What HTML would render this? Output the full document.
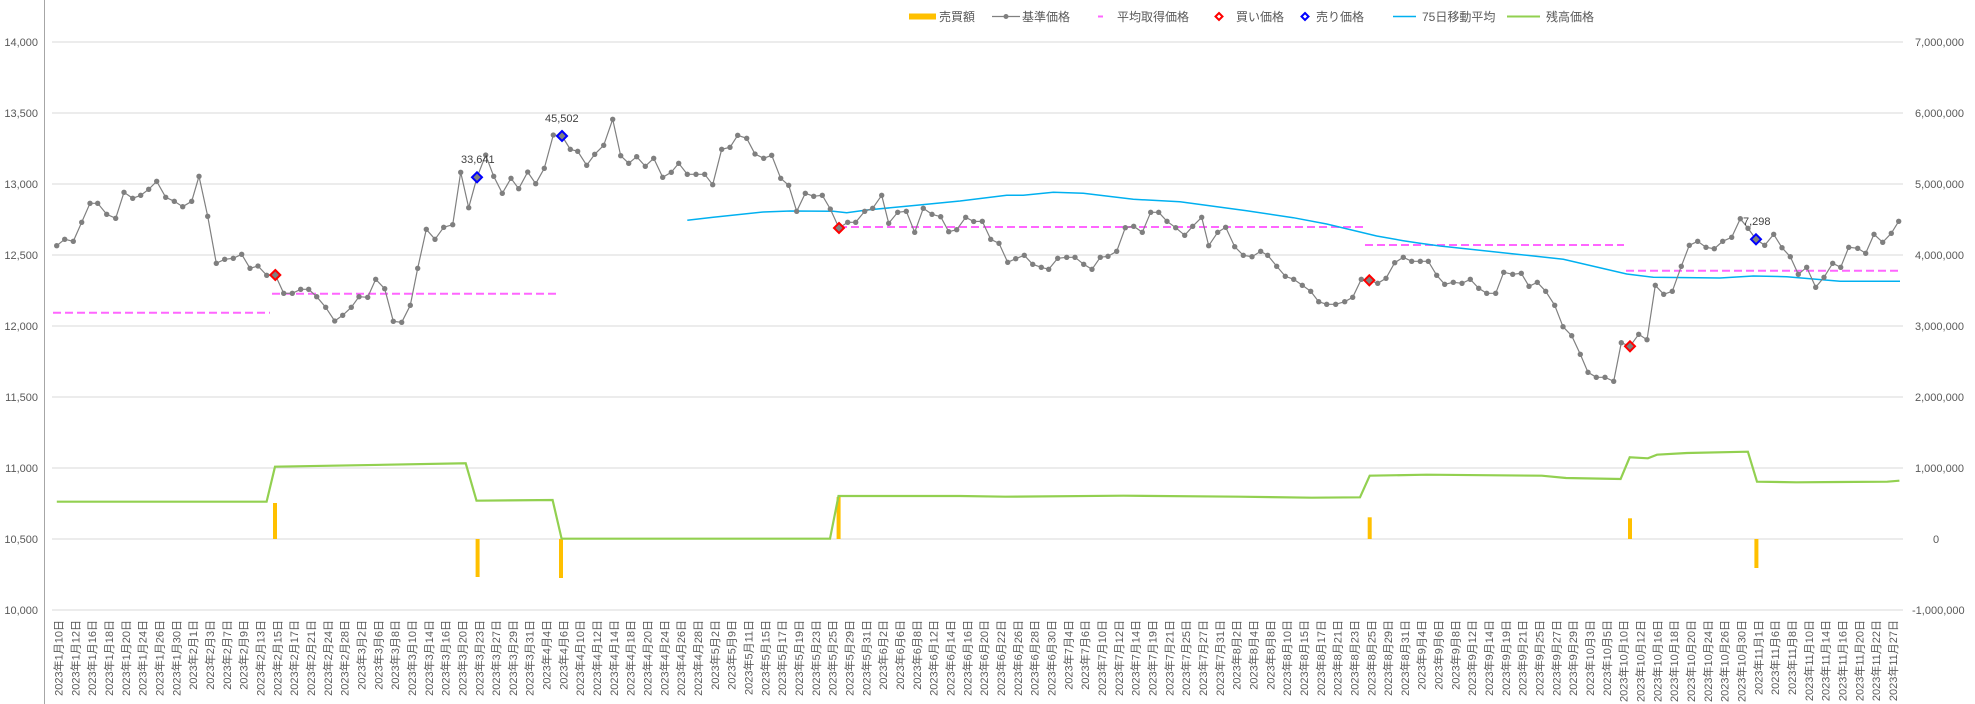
<!DOCTYPE html>
<html><head><meta charset="utf-8"><style>
html,body{margin:0;padding:0;background:#fff;}
svg{display:block;font-family:"Liberation Sans","Noto Sans CJK JP",sans-serif;}
</style></head><body>
<svg width="1975" height="704" viewBox="0 0 1975 704" xmlns="http://www.w3.org/2000/svg">
<defs>
<marker id="dot" viewBox="-4 -4 8 8" markerWidth="6.5" markerHeight="6.5" markerUnits="userSpaceOnUse"><circle r="3.3" fill="#7f7f7f"/></marker>
</defs>
<!-- gridlines -->
<g stroke="#d9d9d9" stroke-width="1">
<line x1="52" y1="42" x2="1903" y2="42"/><line x1="52" y1="113" x2="1903" y2="113"/><line x1="52" y1="184" x2="1903" y2="184"/><line x1="52" y1="255" x2="1903" y2="255"/><line x1="52" y1="326" x2="1903" y2="326"/><line x1="52" y1="397" x2="1903" y2="397"/><line x1="52" y1="468" x2="1903" y2="468"/><line x1="52" y1="539" x2="1903" y2="539"/><line x1="52" y1="610" x2="1903" y2="610"/>
</g>
<line x1="44.5" y1="0" x2="44.5" y2="704" stroke="#a6a6a6" stroke-width="1"/>
<!-- left axis -->
<g font-size="11" fill="#595959" text-anchor="end">
<text x="38" y="46">14,000</text><text x="38" y="117">13,500</text><text x="38" y="188">13,000</text><text x="38" y="259">12,500</text><text x="38" y="330">12,000</text><text x="38" y="401">11,500</text><text x="38" y="472">11,000</text><text x="38" y="543">10,500</text><text x="38" y="614">10,000</text>
</g>
<g font-size="11" fill="#595959">
<text x="1915" y="46">7,000,000</text><text x="1915" y="117">6,000,000</text><text x="1915" y="188">5,000,000</text><text x="1915" y="259">4,000,000</text><text x="1915" y="330">3,000,000</text><text x="1915" y="401">2,000,000</text><text x="1915" y="472">1,000,000</text><text x="1933" y="543">0</text><text x="1912" y="614">-1,000,000</text>
</g>
<!-- bars -->
<g fill="#ffc000">
<rect x="273" y="503" width="4" height="36"/><rect x="475.6" y="539" width="4" height="38"/><rect x="559" y="539" width="4" height="39"/><rect x="836.6" y="497" width="4" height="42"/><rect x="1367.7" y="517.3" width="4" height="21.7"/><rect x="1628" y="518.3" width="4" height="20.7"/><rect x="1754.4" y="539" width="4" height="29"/>
</g>
<!-- balance -->
<polyline fill="none" stroke="#92d050" stroke-width="2.2" points="56.8,501.7 266.6,501.7 275,466.7 465.7,463.3 476.5,500.7 552.6,500 561.6,538.7 830,538.7 838.5,496 960,496 1005.5,496.7 1123.6,495.7 1238.8,496.7 1311.5,497.7 1360,497.3 1369.7,475.7 1426.7,474.7 1541.8,475.7 1566,478 1620.6,479 1629.7,457.3 1647.9,458.3 1657,454.7 1687,453 1747.9,451.7 1757,481.7 1796.4,482.3 1838.8,482 1887.3,481.7 1899.4,480.7"/>
<!-- avg cost -->
<g stroke="#ff66ff" stroke-width="2" stroke-dasharray="8,4">
<line x1="53" y1="312.7" x2="270" y2="312.7"/><line x1="272" y1="293.7" x2="557" y2="293.7"/><line x1="839" y1="227" x2="1364" y2="227"/><line x1="1365" y1="245" x2="1624" y2="245"/><line x1="1626" y1="270.7" x2="1902" y2="270.7"/>
</g>
<!-- MA -->
<polyline fill="none" stroke="#00b0f0" stroke-width="1.5" points="687.3,220.3 713.3,217.3 763.3,212 790,211 833.3,211.3 846.7,212.7 866.7,210 916.7,205.3 960,201 1006.7,195.3 1023.3,195.3 1053.3,192.3 1083.3,193.3 1133.3,199.3 1180,201.7 1246.7,210.7 1293.3,217.7 1326.7,224 1376.7,236 1403.3,240.7 1420,243.3 1440,246 1526.7,255.3 1563.3,259.3 1626.7,274 1653.3,277.3 1720,278 1753.3,276 1786.7,276.7 1840,281.3 1900,281.3"/>
<!-- price -->
<polyline fill="none" stroke="#808080" stroke-width="1.2" marker-start="url(#dot)" marker-mid="url(#dot)" marker-end="url(#dot)" points="56.7,245.7 64.7,239.3 73.3,241.3 81.7,222.3 90,203.3 97.7,203.3 106.7,214.3 115.7,218.3 124,192.3 132.7,198.3 140.7,195.3 148.7,189.3 156.7,181.3 165.7,197.3 174.3,201.3 182.7,206.7 191.7,201.3 199,176.3 207.7,216.3 216.3,263.3 224.7,259.3 233.3,258.3 241.7,254.3 250,268.3 258,266 266.7,275.3 275.3,275 283.7,293.3 292.3,293.3 300.7,289.3 308.7,289.3 316.7,296.7 325.7,307.3 334.7,321 342.7,315.3 351.3,307.3 359,296.7 367.7,297.3 375.7,279.3 384.7,288.7 393.3,321.3 401.7,322.3 410.3,305.3 417.7,268.3 426.3,229.3 435,239.3 443.7,227.3 452.7,224.7 460.7,172.3 468.7,207.7 477,177.3 485.7,155 493.7,176.3 502.3,193.3 511,178.3 518.7,188.7 527.7,172 535.7,183.7 544.3,168.3 553.3,135 562,136 570.3,149.3 577.7,151.3 586.7,165.3 594.7,154.3 603.7,145.3 612.7,119.3 620.7,155.7 628.7,163.3 636.7,156.7 645.3,166.3 653.7,158.3 662.7,177.3 671.3,172.3 678.7,163.3 687.3,174.3 696,174.3 704.7,174.3 712.7,184.7 721.7,149.3 730,147.3 737.7,135.3 746.7,138.3 755,154 763.7,158.3 771.7,155.3 780.7,178.3 788.7,185.3 796.7,211.3 805.3,193.3 813.7,196.3 822.3,195.3 830.3,209 839,228 847.7,222.3 855.7,222.3 864.7,211.3 872.7,208.3 881.7,195.3 888.7,223.3 897.7,212.3 906.3,211.3 914.7,232.3 923.3,208.3 932,214.3 940.7,216.7 948.7,231.7 956.7,229.7 965.7,217.3 973.7,221.5 982.3,221.3 990.7,239.3 999,243.3 1007.7,262.3 1015.7,258.7 1024.3,255.3 1032.7,264.3 1041.3,267.3 1048.7,269.3 1057.7,258.3 1066.7,257.3 1075,257.3 1083.7,264.3 1092,269.3 1100.3,257.3 1108,256.3 1116.7,251.3 1125.3,227.7 1133.7,226.3 1142.3,232.3 1150.7,212.3 1158.7,212.3 1167,221.3 1175.7,227.7 1184.7,235.3 1192.7,226.3 1201.7,217.3 1208.7,245.7 1217.7,232.3 1225.7,227.3 1234.7,246.7 1243.3,255.3 1252,256.7 1260.7,251.3 1267.7,255.3 1276.7,266.3 1285.3,276.3 1293.7,279.3 1302.3,285.3 1310.7,291.3 1318.7,301.7 1326.7,304.3 1335.7,304.3 1344.7,301.7 1352.7,297.3 1361.3,279.3 1369.3,280.3 1377.7,283.3 1386,278.3 1394.7,262.7 1403.3,257.3 1411.7,261.3 1420.3,261.3 1428.3,261.3 1436.7,275.3 1444.7,284.3 1453.3,282.3 1462,283.3 1470.3,279.3 1478.7,288.3 1486.7,293.3 1495.7,293.3 1503.7,272.3 1512.7,274.3 1521.3,273.3 1529,286.3 1537.3,282.3 1545.7,291.3 1554.7,305.3 1563,326.7 1571.7,335.7 1580.3,354.3 1588,372.3 1596.3,377.3 1605,377.3 1613.7,381.3 1621.3,342.7 1630,346.3 1638.7,334.3 1647,339.7 1655.3,285.3 1663.7,294.3 1672.3,291.3 1681.3,266.3 1689.3,245.3 1697.7,241.3 1706,247.3 1714.3,248.7 1722.7,241.3 1731.7,237.3 1740.3,218.7 1748,228.3 1756,239.3 1764.7,245.3 1773.7,234.3 1782,247.7 1790.3,256.7 1798.3,274.3 1806.7,267.3 1815.7,287.3 1824,277.3 1832.7,263.3 1840.7,267.3 1848.7,247.3 1857.7,248.3 1865.7,253.3 1874,234.3 1882.7,242.3 1891.3,233.3 1898.7,221.3"/>
<!-- diamonds -->
<g fill="#808080" stroke-width="2">
<path stroke="#ff0000" d="M275.3,270 L280.3,275 L275.3,280 L270.3,275 Z"/>
<path stroke="#ff0000" d="M839,223 L844,228 L839,233 L834,228 Z"/>
<path stroke="#ff0000" d="M1369.3,275.3 L1374.3,280.3 L1369.3,285.3 L1364.3,280.3 Z"/>
<path stroke="#ff0000" d="M1630,341.3 L1635,346.3 L1630,351.3 L1625,346.3 Z"/>
<path stroke="#0000ff" d="M477,172.3 L482,177.3 L477,182.3 L472,177.3 Z"/>
<path stroke="#0000ff" d="M562,131 L567,136 L562,141 L557,136 Z"/>
<path stroke="#0000ff" d="M1756,234.3 L1761,239.3 L1756,244.3 L1751,239.3 Z"/>
</g>
<g font-size="11" fill="#404040">
<text x="461" y="163">33,641</text><text x="545" y="122">45,502</text><text x="1743" y="225">7,298</text>
</g>
<!-- legend -->
<g font-size="12" fill="#595959">
<rect x="909" y="13.5" width="27" height="6" fill="#ffc000"/><text x="939" y="21">売買額</text>
<line x1="992" y1="16.5" x2="1020" y2="16.5" stroke="#808080" stroke-width="1.2"/><circle cx="1006" cy="16.5" r="2.5" fill="#7f7f7f"/><text x="1022" y="21">基準価格</text>
<line x1="1098" y1="16.5" x2="1103" y2="16.5" stroke="#ff66ff" stroke-width="2"/><text x="1117" y="21">平均取得価格</text>
<path d="M1219,13 L1222.5,16.5 L1219,20 L1215.5,16.5 Z" fill="#fff" stroke="#ff0000" stroke-width="2"/><text x="1236" y="21">買い価格</text>
<path d="M1305,13 L1308.5,16.5 L1305,20 L1301.5,16.5 Z" fill="#fff" stroke="#0000ff" stroke-width="2"/><text x="1316" y="21">売り価格</text>
<line x1="1393" y1="16.5" x2="1416" y2="16.5" stroke="#00b0f0" stroke-width="1.5"/><text x="1422" y="21">75日移動平均</text>
<line x1="1507" y1="16.5" x2="1540" y2="16.5" stroke="#92d050" stroke-width="2"/><text x="1546" y="21">残高価格</text>
</g>
<!-- x labels -->
<g font-size="11" fill="#595959" text-anchor="end">
<text transform="translate(62.5,620) rotate(-90)">2023年1月10日</text>
<text transform="translate(79.3,620) rotate(-90)">2023年1月12日</text>
<text transform="translate(96.2,620) rotate(-90)">2023年1月16日</text>
<text transform="translate(113,620) rotate(-90)">2023年1月18日</text>
<text transform="translate(129.8,620) rotate(-90)">2023年1月20日</text>
<text transform="translate(146.7,620) rotate(-90)">2023年1月24日</text>
<text transform="translate(163.5,620) rotate(-90)">2023年1月26日</text>
<text transform="translate(180.3,620) rotate(-90)">2023年1月30日</text>
<text transform="translate(197.1,620) rotate(-90)">2023年2月1日</text>
<text transform="translate(214,620) rotate(-90)">2023年2月3日</text>
<text transform="translate(230.8,620) rotate(-90)">2023年2月7日</text>
<text transform="translate(247.6,620) rotate(-90)">2023年2月9日</text>
<text transform="translate(264.5,620) rotate(-90)">2023年2月13日</text>
<text transform="translate(281.3,620) rotate(-90)">2023年2月15日</text>
<text transform="translate(298.1,620) rotate(-90)">2023年2月17日</text>
<text transform="translate(314.9,620) rotate(-90)">2023年2月21日</text>
<text transform="translate(331.8,620) rotate(-90)">2023年2月24日</text>
<text transform="translate(348.6,620) rotate(-90)">2023年2月28日</text>
<text transform="translate(365.4,620) rotate(-90)">2023年3月2日</text>
<text transform="translate(382.3,620) rotate(-90)">2023年3月6日</text>
<text transform="translate(399.1,620) rotate(-90)">2023年3月8日</text>
<text transform="translate(415.9,620) rotate(-90)">2023年3月10日</text>
<text transform="translate(432.8,620) rotate(-90)">2023年3月14日</text>
<text transform="translate(449.6,620) rotate(-90)">2023年3月16日</text>
<text transform="translate(466.4,620) rotate(-90)">2023年3月20日</text>
<text transform="translate(483.3,620) rotate(-90)">2023年3月23日</text>
<text transform="translate(500.1,620) rotate(-90)">2023年3月27日</text>
<text transform="translate(516.9,620) rotate(-90)">2023年3月29日</text>
<text transform="translate(533.7,620) rotate(-90)">2023年3月31日</text>
<text transform="translate(550.6,620) rotate(-90)">2023年4月4日</text>
<text transform="translate(567.4,620) rotate(-90)">2023年4月6日</text>
<text transform="translate(584.2,620) rotate(-90)">2023年4月10日</text>
<text transform="translate(601.1,620) rotate(-90)">2023年4月12日</text>
<text transform="translate(617.9,620) rotate(-90)">2023年4月14日</text>
<text transform="translate(634.7,620) rotate(-90)">2023年4月18日</text>
<text transform="translate(651.6,620) rotate(-90)">2023年4月20日</text>
<text transform="translate(668.4,620) rotate(-90)">2023年4月24日</text>
<text transform="translate(685.2,620) rotate(-90)">2023年4月26日</text>
<text transform="translate(702,620) rotate(-90)">2023年4月28日</text>
<text transform="translate(718.9,620) rotate(-90)">2023年5月2日</text>
<text transform="translate(735.7,620) rotate(-90)">2023年5月9日</text>
<text transform="translate(752.5,620) rotate(-90)">2023年5月11日</text>
<text transform="translate(769.4,620) rotate(-90)">2023年5月15日</text>
<text transform="translate(786.2,620) rotate(-90)">2023年5月17日</text>
<text transform="translate(803,620) rotate(-90)">2023年5月19日</text>
<text transform="translate(819.9,620) rotate(-90)">2023年5月23日</text>
<text transform="translate(836.7,620) rotate(-90)">2023年5月25日</text>
<text transform="translate(853.5,620) rotate(-90)">2023年5月29日</text>
<text transform="translate(870.3,620) rotate(-90)">2023年5月31日</text>
<text transform="translate(887.2,620) rotate(-90)">2023年6月2日</text>
<text transform="translate(904,620) rotate(-90)">2023年6月6日</text>
<text transform="translate(920.8,620) rotate(-90)">2023年6月8日</text>
<text transform="translate(937.7,620) rotate(-90)">2023年6月12日</text>
<text transform="translate(954.5,620) rotate(-90)">2023年6月14日</text>
<text transform="translate(971.3,620) rotate(-90)">2023年6月16日</text>
<text transform="translate(988.2,620) rotate(-90)">2023年6月20日</text>
<text transform="translate(1005,620) rotate(-90)">2023年6月22日</text>
<text transform="translate(1021.8,620) rotate(-90)">2023年6月26日</text>
<text transform="translate(1038.6,620) rotate(-90)">2023年6月28日</text>
<text transform="translate(1055.5,620) rotate(-90)">2023年6月30日</text>
<text transform="translate(1072.3,620) rotate(-90)">2023年7月4日</text>
<text transform="translate(1089.1,620) rotate(-90)">2023年7月6日</text>
<text transform="translate(1106,620) rotate(-90)">2023年7月10日</text>
<text transform="translate(1122.8,620) rotate(-90)">2023年7月12日</text>
<text transform="translate(1139.6,620) rotate(-90)">2023年7月14日</text>
<text transform="translate(1156.5,620) rotate(-90)">2023年7月19日</text>
<text transform="translate(1173.3,620) rotate(-90)">2023年7月21日</text>
<text transform="translate(1190.1,620) rotate(-90)">2023年7月25日</text>
<text transform="translate(1207,620) rotate(-90)">2023年7月27日</text>
<text transform="translate(1223.8,620) rotate(-90)">2023年7月31日</text>
<text transform="translate(1240.6,620) rotate(-90)">2023年8月2日</text>
<text transform="translate(1257.4,620) rotate(-90)">2023年8月4日</text>
<text transform="translate(1274.3,620) rotate(-90)">2023年8月8日</text>
<text transform="translate(1291.1,620) rotate(-90)">2023年8月10日</text>
<text transform="translate(1307.9,620) rotate(-90)">2023年8月15日</text>
<text transform="translate(1324.8,620) rotate(-90)">2023年8月17日</text>
<text transform="translate(1341.6,620) rotate(-90)">2023年8月21日</text>
<text transform="translate(1358.4,620) rotate(-90)">2023年8月23日</text>
<text transform="translate(1375.3,620) rotate(-90)">2023年8月25日</text>
<text transform="translate(1392.1,620) rotate(-90)">2023年8月29日</text>
<text transform="translate(1408.9,620) rotate(-90)">2023年8月31日</text>
<text transform="translate(1425.7,620) rotate(-90)">2023年9月4日</text>
<text transform="translate(1442.6,620) rotate(-90)">2023年9月6日</text>
<text transform="translate(1459.4,620) rotate(-90)">2023年9月8日</text>
<text transform="translate(1476.2,620) rotate(-90)">2023年9月12日</text>
<text transform="translate(1493.1,620) rotate(-90)">2023年9月14日</text>
<text transform="translate(1509.9,620) rotate(-90)">2023年9月19日</text>
<text transform="translate(1526.7,620) rotate(-90)">2023年9月21日</text>
<text transform="translate(1543.6,620) rotate(-90)">2023年9月25日</text>
<text transform="translate(1560.4,620) rotate(-90)">2023年9月27日</text>
<text transform="translate(1577.2,620) rotate(-90)">2023年9月29日</text>
<text transform="translate(1594,620) rotate(-90)">2023年10月3日</text>
<text transform="translate(1610.9,620) rotate(-90)">2023年10月5日</text>
<text transform="translate(1627.7,620) rotate(-90)">2023年10月10日</text>
<text transform="translate(1644.5,620) rotate(-90)">2023年10月12日</text>
<text transform="translate(1661.4,620) rotate(-90)">2023年10月16日</text>
<text transform="translate(1678.2,620) rotate(-90)">2023年10月18日</text>
<text transform="translate(1695,620) rotate(-90)">2023年10月20日</text>
<text transform="translate(1711.9,620) rotate(-90)">2023年10月24日</text>
<text transform="translate(1728.7,620) rotate(-90)">2023年10月26日</text>
<text transform="translate(1745.5,620) rotate(-90)">2023年10月30日</text>
<text transform="translate(1762.4,620) rotate(-90)">2023年11月1日</text>
<text transform="translate(1779.2,620) rotate(-90)">2023年11月6日</text>
<text transform="translate(1796,620) rotate(-90)">2023年11月8日</text>
<text transform="translate(1812.8,620) rotate(-90)">2023年11月10日</text>
<text transform="translate(1829.7,620) rotate(-90)">2023年11月14日</text>
<text transform="translate(1846.5,620) rotate(-90)">2023年11月16日</text>
<text transform="translate(1863.3,620) rotate(-90)">2023年11月20日</text>
<text transform="translate(1880.2,620) rotate(-90)">2023年11月22日</text>
<text transform="translate(1897,620) rotate(-90)">2023年11月27日</text>
</g>
</svg>
</body></html>
